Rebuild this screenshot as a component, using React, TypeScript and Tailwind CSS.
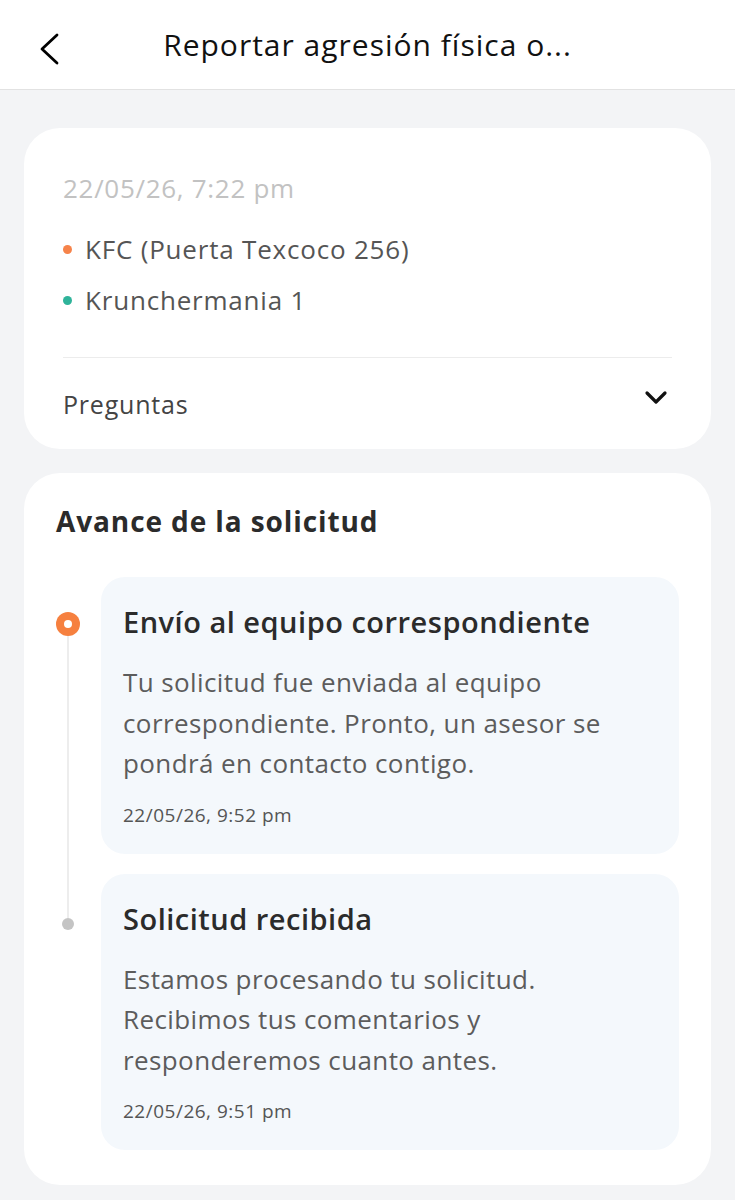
const steps = [
  {
    title: "Envío al equipo correspondiente",
    body: "Tu solicitud fue enviada al equipo correspondiente. Pronto, un asesor se pondrá en contacto contigo.",
    date: "22/05/26, 9:52 pm",
    active: true,
  },
  {
    title: "Solicitud recibida",
    body: "Estamos procesando tu solicitud. Recibimos tus comentarios y responderemos cuanto antes.",
    date: "22/05/26, 9:51 pm",
    active: false,
  },
];

export default function App() {
  return (
    <div className="min-h-[1200px] w-[735px] bg-[#f3f4f6] font-['Open_Sans','Lato',sans-serif]">
      {/* header */}
      <header className="relative flex h-[90px] items-center justify-center border-b border-[#e2e2e2] bg-white">
        <button className="absolute left-[38px] top-[32px] text-black">
          <svg width="24" height="34" viewBox="0 0 24 34" fill="none" stroke="currentColor" strokeWidth="2.8" strokeLinecap="round" strokeLinejoin="round">
            <polyline points="19,3 4,17 19,31" />
          </svg>
        </button>
        <h1 className="text-[30px] tracking-[1px] text-[#111]">Reportar agresión física o...</h1>
      </header>

      <div className="flex flex-col gap-[24px] px-[24px] pt-[38px]">
        {/* summary card */}
        <section className="rounded-[36px] bg-white px-[39px] pt-[42px] pb-[27px]">
          <p className="text-[26px] leading-[36px] tracking-[0.7px] text-[#c2c2c2]">22/05/26, 7:22 pm</p>
          <div className="mt-[25px] flex flex-col gap-[15px]">
            <div className="flex items-center gap-[13px]">
              <span className="h-[9px] w-[9px] rounded-full bg-[#f6834a]" />
              <span className="text-[26px] leading-[36px] tracking-[0.8px] text-[#555]">KFC (Puerta Texcoco 256)</span>
            </div>
            <div className="flex items-center gap-[13px]">
              <span className="h-[9px] w-[9px] rounded-full bg-[#2fb39a]" />
              <span className="text-[26px] leading-[36px] tracking-[0.8px] text-[#555]">Krunchermania 1</span>
            </div>
          </div>
          <div className="mt-[39px] border-t border-[#ececec]" />
          <div className="flex items-center justify-between pt-[28px]">
            <span className="text-[25px] leading-[36px] tracking-[0.8px] text-[#444]">Preguntas</span>
            <svg width="24" height="16" viewBox="0 0 24 16" fill="none" stroke="#111" strokeWidth="3.2" strokeLinecap="round" strokeLinejoin="round" className="-mt-[12px] mr-[4px]">
              <polyline points="3,3 12,12 21,3" />
            </svg>
          </div>
        </section>

        {/* progress card */}
        <section className="rounded-[36px] bg-white px-[32px] pt-[30px] pb-[35px]">
          <h2 className="text-[28px] font-bold leading-[36px] tracking-[0.9px] text-[#2b2b2b]">Avance de la solicitud</h2>
          <div className="mt-[38px] flex flex-col">
            {steps.map((s, i) => (
              <div key={s.title} className="flex">
                <div className="mr-[21px] flex w-[24px] flex-col items-center">
                  {s.active ? (
                    <>
                      <div className="h-[35px]" />
                      <span className="flex h-[24px] w-[24px] items-center justify-center rounded-full bg-[#f6803f]">
                        <span className="h-[8px] w-[8px] rounded-full bg-white" />
                      </span>
                    </>
                  ) : (
                    <>
                      <div className="h-[44px] w-[2px] bg-[#ededed]" />
                      <span className="h-[12px] w-[12px] rounded-full bg-[#c4c4c4]" />
                    </>
                  )}
                  {i < steps.length - 1 && <div className="w-[2px] flex-1 bg-[#ededed]" />}
                </div>
                <div className={i < steps.length - 1 ? "flex-1 pb-[20px]" : "flex-1"}>
                  <div className="rounded-[24px] bg-[#f4f8fc] px-[22px] pt-[27px] pb-[26px]">
                    <h3 className="text-[29px] font-semibold leading-[36px] tracking-[0.5px] text-[#2b2b2b]">{s.title}</h3>
                    <p className="mt-[22px] text-[26px] leading-[40.5px] tracking-[0.4px] text-[#5c5c5c]">{s.body}</p>
                    <p className="mt-[18px] text-[19px] leading-[26px] tracking-[0.5px] text-[#555]">{s.date}</p>
                  </div>
                </div>
              </div>
            ))}
          </div>
        </section>
      </div>
    </div>
  );
}
